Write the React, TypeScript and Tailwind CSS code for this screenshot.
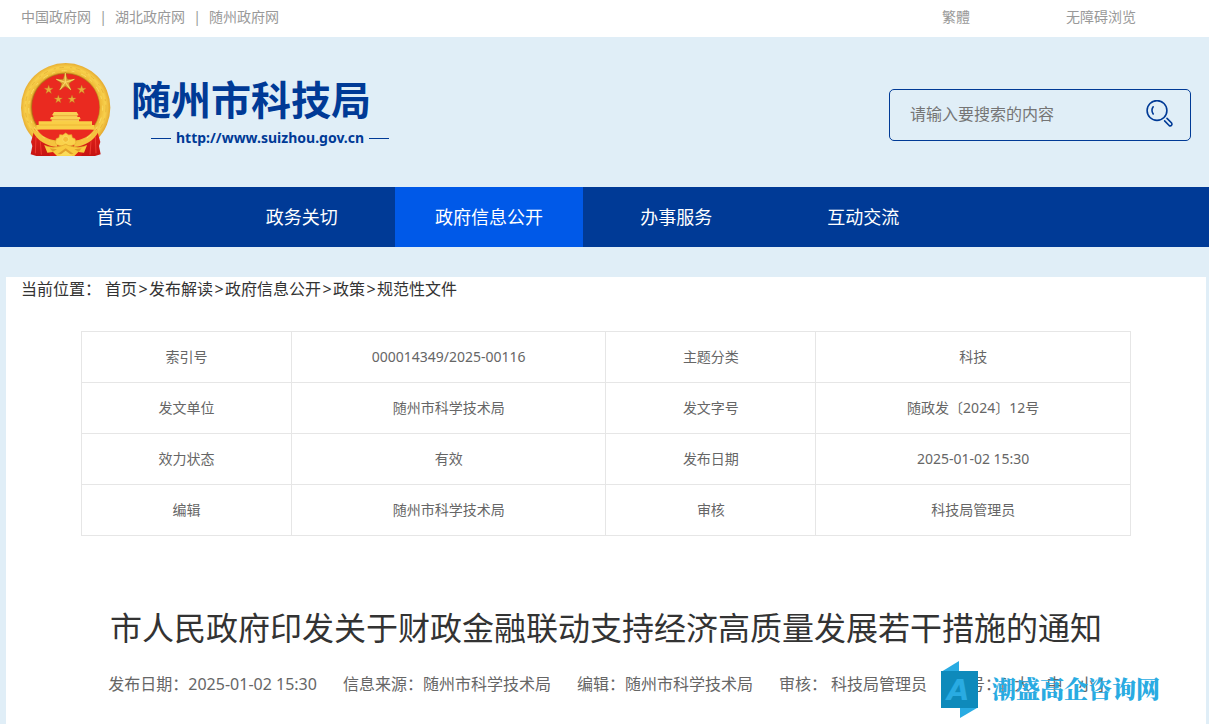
import React from "react";

const starPoints = (cx: number, cy: number, r: number) =>
  Array.from({ length: 10 }, (_, i) => {
    const radius = i % 2 === 0 ? r : r * 0.4;
    const angle = (Math.PI / 5) * i - Math.PI / 2;
    return `${(cx + radius * Math.cos(angle)).toFixed(1)},${(cy + radius * Math.sin(angle)).toFixed(1)}`;
  }).join(" ");

function Emblem() {
  return (
    <svg className="h-24 w-[90px] shrink-0" viewBox="0 0 270 288" role="img" aria-label="国徽">
      <defs>
        <radialGradient id="gold" gradientUnits="userSpaceOnUse" cx="133" cy="136" r="134">
          <stop offset="0.75" stopColor="#b06a14" />
          <stop offset="0.79" stopColor="#efbb38" />
          <stop offset="0.9" stopColor="#f8d04c" />
          <stop offset="1" stopColor="#e6ab30" />
        </radialGradient>
        <linearGradient id="drape" x1="0" y1="0" x2="0" y2="1">
          <stop offset="0" stopColor="#e4221b" />
          <stop offset="1" stopColor="#c61412" />
        </linearGradient>
      </defs>
      <circle cx="134" cy="137" r="134" fill="url(#gold)" />
      <circle cx="134" cy="137" r="121" fill="none" stroke="#e9b63a" strokeWidth="3" strokeDasharray="14 19 6 11" />
      <circle cx="134" cy="137" r="111" fill="none" stroke="#f9dc62" strokeWidth="3" strokeDasharray="9 21 17 13" />
      <circle cx="134" cy="136" r="101" fill="#ea2a20" />
      <polygon points={starPoints(133, 61, 29)} fill="#e2a838" stroke="#a86a14" strokeWidth="1.5" />
      <path d="M133 33v28l-27-9 27 9-16 22 16-22 16 22-16-22 27-9-27 9z" fill="#fbdc68" stroke="#fbdc68" strokeWidth="2" />
      <g fill="#e9ad38" stroke="#bd7a20" strokeWidth="1">
        <polygon points={starPoints(83, 83, 14)} />
        <polygon points={starPoints(182, 83, 14)} />
        <polygon points={starPoints(112, 112, 13)} />
        <polygon points={starPoints(153, 112, 13)} />
      </g>
      <path d="M99 150h68l6 10h-4v5h7l3 7h-5v8H92v-8h-5l3-7h7v-5h-4z" fill="#f9d154" />
      <path d="M98 161h70M93 173h80" stroke="#e39a32" strokeWidth="2" />
      <path d="M53 178h160v11h7v14H46v-14h7z" fill="#f9ce46" />
      <path d="M55 189h156" stroke="#e8ad2f" strokeWidth="2" />
      <path d="M49 203h170c-14 20-34 29-54 32h-62c-22-4-42-12-54-32z" fill="#ea2a20" />
      <path d="M41 200c13 30 34 43 60 49l-25 7 18 26H46l-17-5 5-25-4-12z" fill="url(#drape)" />
      <path d="M227 200c-13 30-34 43-60 49l25 7-18 26h48l17-5-5-25 4-12z" fill="url(#drape)" />
      <path d="M45 224l-2 50M58 238l3 40M223 224l2 50M210 238l-3 40" stroke="#ef3a30" strokeWidth="3" fill="none" />
      <path d="M73 250h122l-14 32H87z" fill="#d91b15" />
      <path d="M41 201c17 26 38 37 65 38l3 16c-34-3-60-19-73-45zM227 201c-17 26-38 37-65 38l-3 16c34-3 60-19 73-45z" fill="#f5c33e" />
      <path d="M103 244l3-14 8-3 2-9 9 1 9-6 9 6 9-1 2 9 8 3 3 14c-18 13-44 13-62 0z" fill="#fad24b" stroke="#e8ad30" strokeWidth="2" />
      <circle cx="134" cy="232" r="9" fill="#f3bd39" stroke="#fbdc60" strokeWidth="3" />
      <path d="M70 250c22 9 44 6 64-3 20 9 42 12 64 3l-9 22-17-2-12 12h-52l-12-12-17 2z" fill="#f8ca3f" />
      <path d="M70 250c22 9 44 6 64-3 20 9 42 12 64 3" fill="none" stroke="#dfa02b" strokeWidth="2" />
      <path d="M86 259l22 3-13 7zM182 259l-22 3 13 7zM110 276l24-17 24 17" fill="#e2a02a" />
      <path d="M114 281l20-15 20 15z" fill="#fbdc59" />
    </svg>
  );
}

function SearchIcon() {
  return (
    <svg className="h-7 w-7" viewBox="0 0 28 28" fill="none" stroke="#003a96" strokeWidth="1.6" strokeLinecap="round" aria-hidden="true">
      <circle cx="11" cy="10.5" r="9.9" />
      <path d="M7.2 6.8c-1.5 2.1-1.5 5 0 7.2" />
      <path d="M18.6 20.9l4.5 4.6c1.8 1.2 3.7-.7 2.5-2.5L21 18.4" />
    </svg>
  );
}

const topLinks = ["中国政府网", "湖北政府网", "随州政府网"];
const navItems = ["首页", "政务关切", "政府信息公开", "办事服务", "互动交流"];
const crumbs = ["首页", "发布解读", "政府信息公开", "政策", "规范性文件"];
const rows = [
  ["索引号", "000014349/2025-00116", "主题分类", "科技"],
  ["发文单位", "随州市科学技术局", "发文字号", "随政发〔2024〕12号"],
  ["效力状态", "有效", "发布日期", "2025-01-02 15:30"],
  ["编辑", "随州市科学技术局", "审核", "科技局管理员"],
];

function Watermark() {
  return (
    <div className="pointer-events-none absolute top-[383px] right-[46px] flex items-center gap-3">
      <svg className="h-[60px] w-10" viewBox="0 0 40 60" aria-hidden="true">
        <path d="M1 12L19 1v11z" fill="#29abe2" />
        <path d="M20 48h17L20 58z" fill="#29abe2" />
        <path d="M1 11h37v37H1z" fill="#0e8abb" />
        <text x="7" y="40" fontSize="29" fontWeight="700" fontStyle="italic" fill="#29abe2" className="font-['DejaVu_Sans',sans-serif]">
          A
        </text>
      </svg>
      <span className="pb-1 text-2xl leading-8 font-black whitespace-nowrap text-[#29abe2] font-['Noto_Serif_CJK_SC','Noto_Sans_CJK_SC',serif]">
        潮盛高企咨询网
      </span>
    </div>
  );
}

export default function App() {
  return (
    <div className="flex min-h-screen flex-col bg-[#e0eef7] font-['Noto_Sans','Noto_Sans_CJK_SC',sans-serif] text-[#333333]">
      <div className="bg-white">
        <div className="mr-[3px] ml-[6px] flex h-[37px] items-center justify-between pr-[70px] pb-1 pl-[15px] text-sm leading-5 text-[#999999]">
          <div className="flex">
            {topLinks.map((link, i) => (
              <React.Fragment key={link}>
                {i > 0 && <span className="w-6 text-center">|</span>}
                <a href="#">{link}</a>
              </React.Fragment>
            ))}
          </div>
          <div className="flex gap-24">
            <a href="#" lang="zh-Hant">繁體</a>
            <a href="#">无障碍浏览</a>
          </div>
        </div>
      </div>

      <header className="mr-[3px] ml-[6px] flex h-[150px] items-start justify-between px-[15px]">
        <a href="#" className="mt-[25px] flex items-start gap-5 text-[#003a96]">
          <Emblem />
          <div className="pt-3.5">
            <div className="text-[40px] leading-[48px] font-bold">随州市科技局</div>
            <div className="mt-1 flex items-center gap-[5px] pl-5 text-sm leading-5 font-bold">
              <span className="h-px w-5 bg-[#003a96]" />
              http://www.suizhou.gov.cn
              <span className="h-px w-5 bg-[#003a96]" />
            </div>
          </div>
        </a>
        <form className="mt-[52px] flex h-[52px] w-[302px] items-center rounded-[5px] border border-[#003a96] pr-4 pb-0.5 pl-5" onSubmit={(e) => e.preventDefault()}>
          <input
            type="text"
            aria-label="搜索"
            placeholder="请输入要搜索的内容"
            className="min-w-0 flex-1 bg-transparent text-base leading-6 outline-none placeholder:text-[#757575]"
          />
          <button type="submit" aria-label="搜索">
            <SearchIcon />
          </button>
        </form>
      </header>

      <nav className="bg-[#003a96]">
        <div className="mr-[3px] ml-[6px] flex px-[15px] text-lg leading-[60px] text-white">
          {navItems.map((item) => (
            <a key={item} href="#" className={item === "政府信息公开" ? "w-[16%] bg-[#0059e8] text-center" : "w-[16%] text-center"}>
              {item}
            </a>
          ))}
        </div>
      </nav>

      <main className="relative mt-[30px] mr-[3px] ml-[6px] flex-1 bg-white">
        <div className="flex px-[15px] text-base leading-6">
          <span className="mr-1">当前位置：</span>
          {crumbs.map((crumb, i) => (
            <React.Fragment key={crumb}>
              {i > 0 && <span className="w-3 text-center">&gt;</span>}
              <a href="#">{crumb}</a>
            </React.Fragment>
          ))}
        </div>

        <div className="px-[75px] pt-[30px]">
          <table className="w-full table-fixed border-collapse text-center text-sm text-[#666666]">
            <colgroup>
              <col className="w-[20%]" />
              <col className="w-[30%]" />
              <col className="w-[20%]" />
              <col className="w-[30%]" />
            </colgroup>
            <tbody>
              {rows.map((row) => (
                <tr key={row[0]}>
                  {row.map((cell, i) =>
                    i % 2 === 0 ? (
                      <th key={i} scope="row" className="h-[51px] border border-[#e6e6e6] font-normal">{cell}</th>
                    ) : (
                      <td key={i} className="h-[51px] border border-[#e6e6e6]">{cell}</td>
                    ),
                  )}
                </tr>
              ))}
            </tbody>
          </table>
        </div>

        <h1 className="mt-[68px] text-center text-[32px] leading-[48px]">
          市人民政府印发关于财政金融联动支持经济高质量发展若干措施的通知
        </h1>
        <div className="mt-5 flex justify-center gap-[26px] text-base leading-6 whitespace-nowrap text-[#666666]">
          <span>发布日期：2025-01-02 15:30</span>
          <span>信息来源：随州市科学技术局</span>
          <span>编辑：随州市科学技术局</span>
          <span>审核： 科技局管理员</span>
          <span className="flex">
            字号：[
            <span className="flex gap-4 pr-1 pl-2">
              <button type="button">大</button>
              <button type="button">中</button>
              <button type="button">小</button>
            </span>
            ]
          </span>
        </div>
        <Watermark />
      </main>
    </div>
  );
}
